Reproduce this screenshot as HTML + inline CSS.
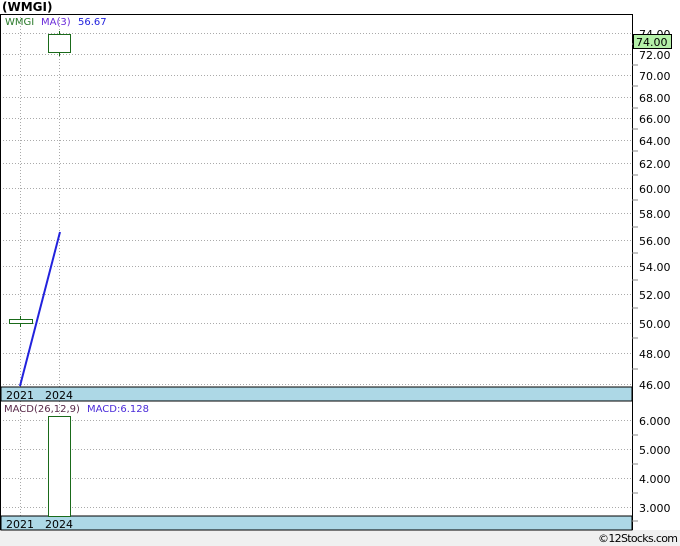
<!DOCTYPE html>
<html><head><style>
body{margin:0;background:#fff;}
svg{display:block;font-family:"DejaVu Sans","Liberation Sans",sans-serif;}
</style></head><body>
<svg width="680" height="546" xmlns="http://www.w3.org/2000/svg">
<rect x="0" y="0" width="680" height="546" fill="#fff"/>
<rect x="0" y="530" width="680" height="16" fill="#f0f0f0"/>
<text x="2" y="11" font-size="12" font-weight="bold" fill="#000">(WMGI)</text>
<g stroke="#aaa" stroke-dasharray="1,2" stroke-width="1">
<line x1="0" x2="632" y1="33.5" y2="33.5"/><line x1="0" x2="632" y1="54.5" y2="54.5"/>
<line x1="0" x2="632" y1="75.5" y2="75.5"/><line x1="0" x2="632" y1="97.5" y2="97.5"/>
<line x1="0" x2="632" y1="118.5" y2="118.5"/><line x1="0" x2="632" y1="140.5" y2="140.5"/>
<line x1="0" x2="632" y1="163.5" y2="163.5"/><line x1="0" x2="632" y1="188.5" y2="188.5"/>
<line x1="0" x2="632" y1="213.5" y2="213.5"/><line x1="0" x2="632" y1="240.5" y2="240.5"/>
<line x1="0" x2="632" y1="266.5" y2="266.5"/><line x1="0" x2="632" y1="294.5" y2="294.5"/>
<line x1="0" x2="632" y1="323.5" y2="323.5"/><line x1="0" x2="632" y1="353.5" y2="353.5"/>
<line x1="0" x2="632" y1="384.5" y2="384.5"/>
<line x1="0" x2="632" y1="420.5" y2="420.5"/><line x1="0" x2="632" y1="449.5" y2="449.5"/>
<line x1="0" x2="632" y1="478.5" y2="478.5"/><line x1="0" x2="632" y1="507.5" y2="507.5"/>
<line x1="20.5" x2="20.5" y1="14" y2="530"/><line x1="59.5" x2="59.5" y1="14" y2="530"/>
</g>
<g fill="none" stroke="#000"><rect x="0.5" y="14.5" width="632" height="515"/></g>
<rect x="1" y="387" width="631" height="14" fill="#add8e6" stroke="#000"/>
<rect x="1" y="516" width="631" height="14" fill="#add8e6" stroke="#000"/>
<g font-size="11" fill="#000"><text x="6" y="399">2021</text><text x="45" y="399">2024</text>
<text x="6" y="528">2021</text><text x="45" y="528">2024</text></g>
<text x="5" y="25" font-size="10" fill="#2a7a2a">WMGI</text>
<text x="41" y="25" font-size="10" fill="#6a2bd9">MA(3)</text>
<text x="78" y="25" font-size="10" fill="#2222dd">56.67</text>
<text x="4" y="412" font-size="10" fill="#5a2a4a">MACD(26,12,9)</text>
<text x="87" y="412" font-size="10" fill="#4a2bd9">MACD:6.128</text>
<line x1="59.5" x2="59.5" y1="31" y2="56" stroke="#1a6a1a"/>
<rect x="48.5" y="34.5" width="22" height="18" fill="#fff" stroke="#1a6a1a"/>
<line x1="20.5" x2="20.5" y1="316" y2="327" stroke="#1a6a1a"/>
<rect x="9.5" y="319.5" width="23" height="4" fill="#fff" stroke="#1a6a1a"/>
<line x1="20" y1="386" x2="60" y2="232" stroke="#2222dd" stroke-width="2"/>
<rect x="48.5" y="416.5" width="22" height="100" fill="#fff" stroke="#1a6a1a"/>
<g stroke="#888"><line x1="632" x2="638" y1="44" y2="44"/><line x1="632" x2="638" y1="65" y2="65"/><line x1="632" x2="638" y1="86" y2="86"/><line x1="632" x2="638" y1="108" y2="108"/><line x1="632" x2="638" y1="129" y2="129"/><line x1="632" x2="638" y1="151" y2="151"/><line x1="632" x2="638" y1="175" y2="175"/><line x1="632" x2="638" y1="200" y2="200"/><line x1="632" x2="638" y1="227" y2="227"/><line x1="632" x2="638" y1="253" y2="253"/><line x1="632" x2="638" y1="280" y2="280"/><line x1="632" x2="638" y1="308" y2="308"/><line x1="632" x2="638" y1="338" y2="338"/><line x1="632" x2="638" y1="369" y2="369"/><line x1="632" x2="638" y1="435" y2="435"/><line x1="632" x2="638" y1="464" y2="464"/><line x1="632" x2="638" y1="493" y2="493"/><line x1="632" x2="638" y1="521" y2="521"/></g>
<g font-size="11" fill="#000">
<text x="639" y="38">74.00</text><text x="639" y="59">72.00</text><text x="639" y="80">70.00</text>
<text x="639" y="102">68.00</text><text x="639" y="123">66.00</text><text x="639" y="145">64.00</text>
<text x="639" y="168">62.00</text><text x="639" y="193">60.00</text><text x="639" y="218">58.00</text>
<text x="639" y="245">56.00</text><text x="639" y="271">54.00</text><text x="639" y="299">52.00</text>
<text x="639" y="328">50.00</text><text x="639" y="358">48.00</text><text x="639" y="389">46.00</text>
<text x="639" y="425">6.000</text><text x="639" y="454">5.000</text><text x="639" y="483">4.000</text><text x="639" y="512">3.000</text>
</g>
<rect x="633.5" y="34.5" width="38" height="14" fill="#b4f0a8" stroke="#000"/>
<text x="636" y="46" font-size="11" fill="#000">74.00</text>
<text x="678" y="542" font-size="11" fill="#000" text-anchor="end" textLength="80">©12Stocks.com</text>
</svg>
</body></html>
